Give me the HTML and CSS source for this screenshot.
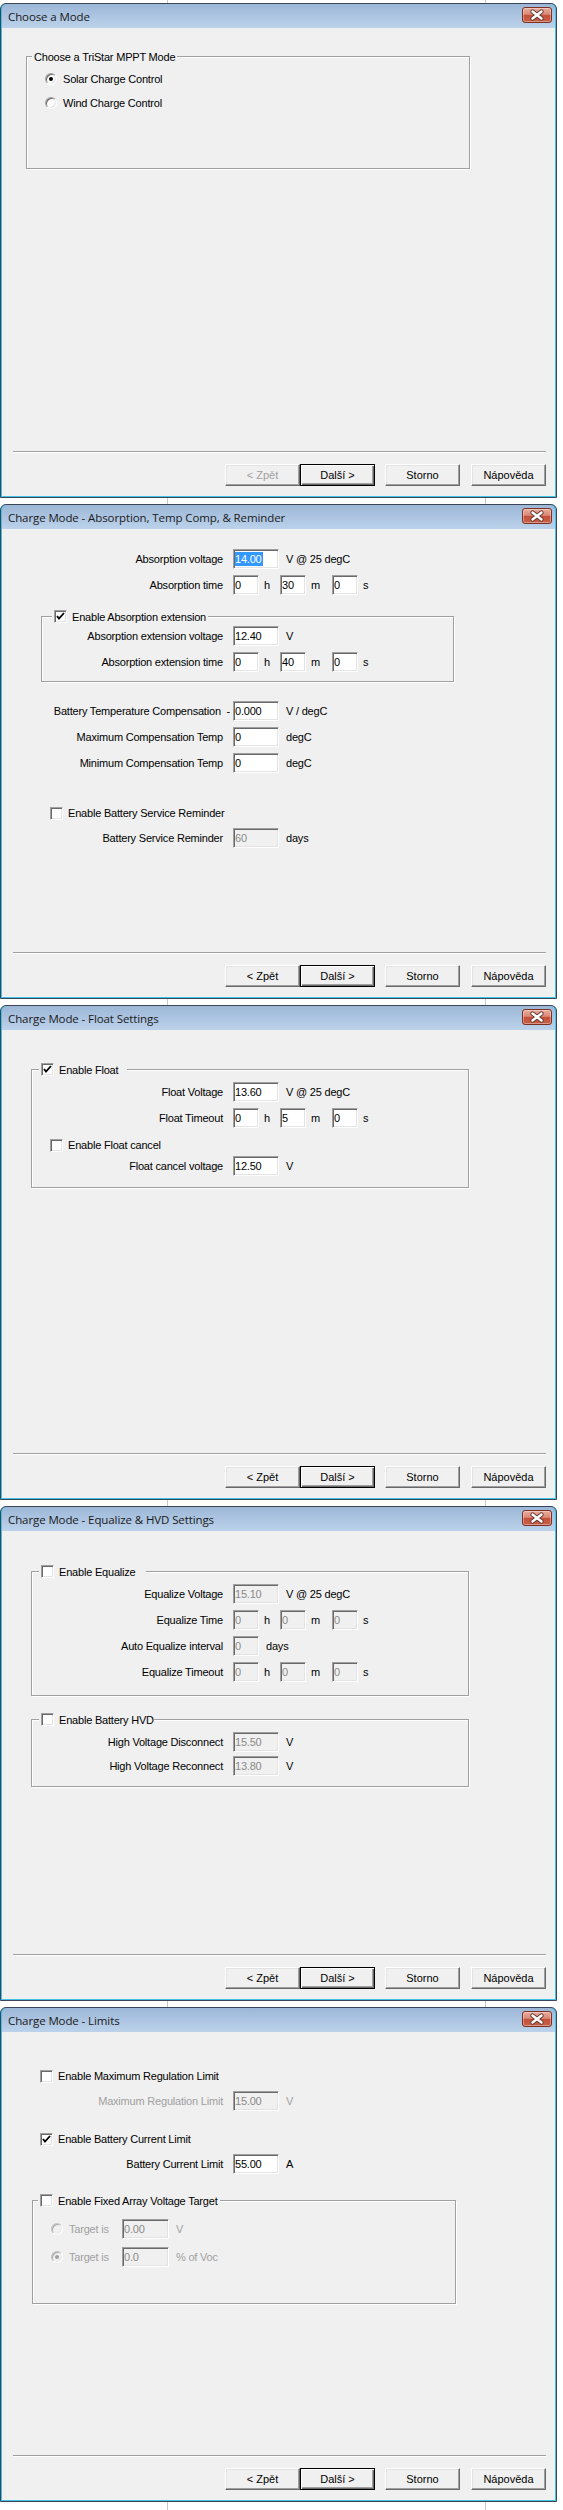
FILE: index.html
```html
<!DOCTYPE html>
<html lang="cs">
<head>
  <meta charset="UTF-8">
  <title>TriStar MPPT - Charge Mode</title>
  <link rel="stylesheet" href="styles.css">
</head>
<body>

  <!-- 1. mode -->
  <div class="win">
    <div class="titlebar">
      <span class="title">Choose a Mode</span>
      <span class="close"><svg width="30" height="16" viewBox="0 0 30 16"><path d="M10.5 4.5 19.5 11.5M19.5 4.5 10.5 11.5" stroke="#6a3b34" stroke-width="4.4" stroke-linecap="round"/><path d="M10.5 4.5 19.5 11.5M19.5 4.5 10.5 11.5" stroke="#fff" stroke-width="2.4" stroke-linecap="round"/></svg></span>
    </div>
    <div class="client">
      <div class="body w-mode">
        <fieldset class="group g-mode">
          <legend>Choose a TriStar MPPT Mode</legend>
          <div class="opt"><span class="radio on"></span>Solar Charge Control</div>
          <div class="opt"><span class="radio"></span>Wind Charge Control</div>
        </fieldset>
      </div>
      <div class="footer">
        <div class="sep"></div>
        <div class="buttons">
          <button class="btn" disabled>&lt; Zpět</button>
          <button class="btn default">Další &gt;</button>
          <button class="btn cancel">Storno</button>
          <button class="btn help">Nápověda</button>
        </div>
      </div>
    </div>
  </div>

  <!-- 2. absorption -->
  <div class="win">
    <div class="titlebar">
      <span class="title">Charge Mode - Absorption, Temp Comp, &amp; Reminder</span>
      <span class="close"><svg width="30" height="16" viewBox="0 0 30 16"><path d="M10.5 4.5 19.5 11.5M19.5 4.5 10.5 11.5" stroke="#6a3b34" stroke-width="4.4" stroke-linecap="round"/><path d="M10.5 4.5 19.5 11.5M19.5 4.5 10.5 11.5" stroke="#fff" stroke-width="2.4" stroke-linecap="round"/></svg></span>
    </div>
    <div class="client">
      <div class="body w-abs">
        <div class="row">
          <span class="lbl">Absorption voltage</span>
          <span class="edit"><span class="sel">14.00</span></span>
          <span class="unit">V @ 25 degC</span>
        </div>
        <div class="row">
          <span class="lbl">Absorption time</span>
          <span class="edit sm">0</span><span class="tu">h</span>
          <span class="edit sm">30</span><span class="tu m">m</span>
          <span class="edit sm">0</span><span class="tu">s</span>
        </div>

        <fieldset class="group g-ext">
          <legend><span class="box on"></span>Enable Absorption extension</legend>
          <div class="row">
            <span class="lbl">Absorption extension voltage</span>
            <span class="edit">12.40</span>
            <span class="unit">V</span>
          </div>
          <div class="row">
            <span class="lbl">Absorption extension time</span>
            <span class="edit sm">0</span><span class="tu">h</span>
            <span class="edit sm">40</span><span class="tu m">m</span>
            <span class="edit sm">0</span><span class="tu">s</span>
          </div>
        </fieldset>

        <div class="row r-comp">
          <span class="lbl minus">Battery Temperature Compensation  -</span>
          <span class="edit">0.000</span>
          <span class="unit">V / degC</span>
        </div>
        <div class="row">
          <span class="lbl">Maximum Compensation Temp</span>
          <span class="edit">0</span>
          <span class="unit">degC</span>
        </div>
        <div class="row">
          <span class="lbl">Minimum Compensation Temp</span>
          <span class="edit">0</span>
          <span class="unit">degC</span>
        </div>

        <div class="check c-remind"><span class="box"></span>Enable Battery Service Reminder</div>
        <div class="row r-remind">
          <span class="lbl">Battery Service Reminder</span>
          <span class="edit off">60</span>
          <span class="unit">days</span>
        </div>
      </div>
      <div class="footer">
        <div class="sep"></div>
        <div class="buttons">
          <button class="btn">&lt; Zpět</button>
          <button class="btn default">Další &gt;</button>
          <button class="btn cancel">Storno</button>
          <button class="btn help">Nápověda</button>
        </div>
      </div>
    </div>
  </div>

  <!-- 3. float -->
  <div class="win">
    <div class="titlebar">
      <span class="title">Charge Mode - Float Settings</span>
      <span class="close"><svg width="30" height="16" viewBox="0 0 30 16"><path d="M10.5 4.5 19.5 11.5M19.5 4.5 10.5 11.5" stroke="#6a3b34" stroke-width="4.4" stroke-linecap="round"/><path d="M10.5 4.5 19.5 11.5M19.5 4.5 10.5 11.5" stroke="#fff" stroke-width="2.4" stroke-linecap="round"/></svg></span>
    </div>
    <div class="client">
      <div class="body w-float">
        <fieldset class="group g-float">
          <legend><span class="box on"></span>Enable Float</legend>
          <div class="row">
            <span class="lbl">Float Voltage</span>
            <span class="edit">13.60</span>
            <span class="unit">V @ 25 degC</span>
          </div>
          <div class="row">
            <span class="lbl">Float Timeout</span>
            <span class="edit sm">0</span><span class="tu">h</span>
            <span class="edit sm">5</span><span class="tu m">m</span>
            <span class="edit sm">0</span><span class="tu">s</span>
          </div>
          <div class="check c-cancel"><span class="box"></span>Enable Float cancel</div>
          <div class="row r-cancel">
            <span class="lbl">Float cancel voltage</span>
            <span class="edit">12.50</span>
            <span class="unit">V</span>
          </div>
        </fieldset>
      </div>
      <div class="footer">
        <div class="sep"></div>
        <div class="buttons">
          <button class="btn">&lt; Zpět</button>
          <button class="btn default">Další &gt;</button>
          <button class="btn cancel">Storno</button>
          <button class="btn help">Nápověda</button>
        </div>
      </div>
    </div>
  </div>

  <!-- 4. equalize & hvd -->
  <div class="win">
    <div class="titlebar">
      <span class="title">Charge Mode - Equalize &amp; HVD Settings</span>
      <span class="close"><svg width="30" height="16" viewBox="0 0 30 16"><path d="M10.5 4.5 19.5 11.5M19.5 4.5 10.5 11.5" stroke="#6a3b34" stroke-width="4.4" stroke-linecap="round"/><path d="M10.5 4.5 19.5 11.5M19.5 4.5 10.5 11.5" stroke="#fff" stroke-width="2.4" stroke-linecap="round"/></svg></span>
    </div>
    <div class="client">
      <div class="body w-eq">
        <fieldset class="group g-eq">
          <legend><span class="box"></span>Enable Equalize</legend>
          <div class="row">
            <span class="lbl">Equalize Voltage</span>
            <span class="edit off">15.10</span>
            <span class="unit">V @ 25 degC</span>
          </div>
          <div class="row r-eqtime">
            <span class="lbl">Equalize Time</span>
            <span class="edit sm off">0</span><span class="tu">h</span>
            <span class="edit sm off">0</span><span class="tu m">m</span>
            <span class="edit sm off">0</span><span class="tu">s</span>
          </div>
          <div class="row">
            <span class="lbl">Auto Equalize interval</span>
            <span class="edit sm off">0</span>
            <span class="unit">days</span>
          </div>
          <div class="row">
            <span class="lbl">Equalize Timeout</span>
            <span class="edit sm off">0</span><span class="tu">h</span>
            <span class="edit sm off">0</span><span class="tu m">m</span>
            <span class="edit sm off">0</span><span class="tu">s</span>
          </div>
        </fieldset>

        <fieldset class="group g-hvd">
          <legend><span class="box"></span>Enable Battery HVD</legend>
          <div class="row">
            <span class="lbl">High Voltage Disconnect</span>
            <span class="edit off">15.50</span>
            <span class="unit">V</span>
          </div>
          <div class="row">
            <span class="lbl">High Voltage Reconnect</span>
            <span class="edit off">13.80</span>
            <span class="unit">V</span>
          </div>
        </fieldset>
      </div>
      <div class="footer">
        <div class="sep"></div>
        <div class="buttons">
          <button class="btn">&lt; Zpět</button>
          <button class="btn default">Další &gt;</button>
          <button class="btn cancel">Storno</button>
          <button class="btn help">Nápověda</button>
        </div>
      </div>
    </div>
  </div>

  <!-- 5. limits -->
  <div class="win">
    <div class="titlebar">
      <span class="title">Charge Mode - Limits</span>
      <span class="close"><svg width="30" height="16" viewBox="0 0 30 16"><path d="M10.5 4.5 19.5 11.5M19.5 4.5 10.5 11.5" stroke="#6a3b34" stroke-width="4.4" stroke-linecap="round"/><path d="M10.5 4.5 19.5 11.5M19.5 4.5 10.5 11.5" stroke="#fff" stroke-width="2.4" stroke-linecap="round"/></svg></span>
    </div>
    <div class="client">
      <div class="body w-lim">
        <div class="check c-maxreg"><span class="box"></span>Enable Maximum Regulation Limit</div>
        <div class="row r-sub dis">
          <span class="lbl">Maximum Regulation Limit</span>
          <span class="edit off">15.00</span>
          <span class="unit">V</span>
        </div>
        <div class="check c-curr"><span class="box on"></span>Enable Battery Current Limit</div>
        <div class="row r-sub">
          <span class="lbl">Battery Current Limit</span>
          <span class="edit">55.00</span>
          <span class="unit">A</span>
        </div>

        <fieldset class="group g-arr">
          <legend><span class="box"></span>Enable Fixed Array Voltage Target</legend>
          <div class="opt dis"><span class="radio"></span><span class="olbl">Target is</span><span class="edit off">0.00</span><span class="unit">V</span></div>
          <div class="opt dis"><span class="radio on"></span><span class="olbl">Target is</span><span class="edit off">0.0</span><span class="unit">% of Voc</span></div>
        </fieldset>
      </div>
      <div class="footer">
        <div class="sep"></div>
        <div class="buttons">
          <button class="btn">&lt; Zpět</button>
          <button class="btn default">Další &gt;</button>
          <button class="btn cancel">Storno</button>
          <button class="btn help">Nápověda</button>
        </div>
      </div>
    </div>
  </div>

</body>
</html>
```

FILE: styles.css
```css
* {
  box-sizing: border-box;
}

body {
  margin: 0;
  padding: 3px 0 0;
  width: 563px;
  font-family: "Liberation Sans", Arial, sans-serif;
  font-size: 11px;
  letter-spacing: -0.2px;
  color: #000;
  background-color: #fff;
  /* grid lines of the window behind */
  background-image: linear-gradient(to right,
    transparent 167px, #c9c9c9 167px, #c9c9c9 168px, transparent 168px,
    transparent 485px, #c9c9c9 485px, #c9c9c9 486px, transparent 486px);
}

/* ---------- window frame ---------- */

.win {
  width: 557px;
  height: 495px;
  margin-bottom: 6px;
  padding: 0 1px 1px;
  border: 1px solid #3a4658;
  border-radius: 6px 6px 0 0;
  background: #3fc3e6;
  display: flex;
  flex-direction: column;
  overflow: hidden;
}

.titlebar {
  flex: none;
  height: 24px;
  padding: 0 3px 0 6px;
  display: flex;
  align-items: center;
  justify-content: space-between;
  background: linear-gradient(#9cb7d7, #bcd2eb);
  border-radius: 5px 5px 0 0;
}

.title {
  font-family: "Open Sans", sans-serif;
  font-size: 11.5px;
  letter-spacing: -0.1px;
  color: #1a1a1a;
}

.close {
  align-self: flex-start;
  margin-top: 3px;
  width: 30px;
  height: 16px;
  border: 1px solid #7d2f24;
  border-radius: 3px;
  background: linear-gradient(#e9ab9b, #d98a77 45%, #c5503a 52%, #c75f47);
  box-shadow: inset 0 0 0 1px rgba(255, 255, 255, 0.35);
  display: flex;
  align-items: center;
  justify-content: center;
}

.close svg {
  display: block;
  margin: -1px;
}

.client {
  flex: 1;
  background: #f0f0f0;
  display: flex;
  flex-direction: column;
}

.body {
  flex: 1;
}

/* ---------- footer ---------- */

.footer {
  flex: none;
  padding: 0 9px 10px 11px;
}

.sep {
  height: 2px;
  border-top: 1px solid #a0a0a0;
  border-bottom: 1px solid #fff;
  margin-bottom: 11px;
}

.buttons {
  display: flex;
  justify-content: flex-end;
}

.btn {
  width: 75px;
  height: 22px;
  padding: 0;
  font: inherit;
  color: #000;
  background: #f0f0f0;
  border: 1px solid;
  border-color: #fff #696969 #696969 #fff;
  box-shadow: inset -1px -1px 0 #a0a0a0, inset 1px 1px 0 #e3e3e3;
}

.btn:disabled {
  color: #a0a0a0;
}

.btn.default {
  border: 1px solid #000;
  box-shadow: inset 1px 1px 0 #fff, inset -1px -1px 0 #696969, inset -2px -2px 0 #a0a0a0;
}

.btn.cancel {
  margin-left: 10px;
}

.btn.help {
  margin-left: 11px;
}

/* ---------- controls ---------- */

.group {
  margin: 0;
  padding: 0;
  border: 1px solid #a0a0a0;
  box-shadow: 1px 1px 0 #fff, inset 1px 1px 0 #fff;
}

.group legend {
  height: 15px;
  padding: 0 2px;
  display: flex;
  align-items: center;
  background: #f0f0f0;
}

.row {
  display: flex;
  align-items: center;
  height: 20px;
  --lw: 231px;
}

.lbl {
  flex: none;
  width: var(--lw);
  padding-right: 10px;
  text-align: right;
  white-space: nowrap;
}

.lbl.minus {
  white-space: pre;
  padding-right: 3px;
}

.edit {
  flex: none;
  width: 46px;
  height: 20px;
  padding: 0 1px;
  display: flex;
  align-items: center;
  background: #fff;
  border: 1px solid;
  border-color: #a0a0a0 #fff #fff #a0a0a0;
  box-shadow: inset 1px 1px 0 #696969, inset -1px -1px 0 #e3e3e3;
  line-height: 14px;
}

.edit.sm {
  width: 26px;
}

.edit.off {
  background: #f0f0f0;
  color: #8a8a8a;
}

.sel {
  background: #3399ff;
  color: #fff;
  padding-right: 1px;
}

.unit {
  padding-left: 7px;
  white-space: nowrap;
}

.tu {
  flex: none;
  width: 21px;
  padding-left: 5px;
}

.tu.m {
  width: 26px;
}

.check,
.opt {
  display: flex;
  align-items: center;
  height: 20px;
  white-space: nowrap;
}

.box {
  flex: none;
  width: 13px;
  height: 13px;
  margin-right: 5px;
  background: #fff;
  border: 1px solid;
  border-color: #a0a0a0 #fff #fff #a0a0a0;
  box-shadow: inset 1px 1px 0 #696969, inset -1px -1px 0 #e3e3e3;
}

.box.on {
  background: #fff url("data:image/svg+xml,%3Csvg xmlns='http://www.w3.org/2000/svg' width='11' height='11'%3E%3Cpath d='M2 5l2 2.5L9 2' fill='none' stroke='%23000' stroke-width='1.8'/%3E%3C/svg%3E") no-repeat center;
}

.radio {
  flex: none;
  width: 12px;
  height: 12px;
  margin-right: 6px;
  border-radius: 50%;
  background: #fff;
  border: 1px solid;
  border-color: #a0a0a0 #fff #fff #a0a0a0;
  box-shadow: inset 1px 1px 0 #696969, inset -1px -1px 0 #e3e3e3;
  display: flex;
  align-items: center;
  justify-content: center;
}

.radio.on::after {
  content: "";
  width: 4px;
  height: 4px;
  border-radius: 50%;
  background: #000;
}

.dis {
  color: #a0a0a0;
}

.dis .radio {
  background: #f0f0f0;
  border-color: #c4c4c4 #fff #fff #c4c4c4;
  box-shadow: inset 1px 1px 0 #a8a8a8, inset -1px -1px 0 #e8e8e8;
}

.dis .radio.on::after {
  background: #a0a0a0;
}

/* ---------- 1. mode ---------- */

.w-mode {
  padding-top: 21px;
}

.g-mode {
  margin-left: 24px;
  width: 444px;
  padding: 5px 0 55px;
}

.g-mode legend {
  margin-left: 5px;
}

.g-mode .opt {
  margin-left: 18px;
}

.g-mode .opt + .opt {
  margin-top: 4px;
}

/* ---------- 2. absorption ---------- */

.w-abs {
  padding-top: 20px;
}

.w-abs > .row + .row {
  margin-top: 6px;
}

.g-ext {
  margin: 14px 0 0 39px;
  width: 413px;
  padding: 2px 0 9px;
}

.g-ext legend {
  margin-left: 10px;
}

.g-ext .row {
  --lw: 191px;
}

.g-ext .row + .row {
  margin-top: 6px;
}

.w-abs .r-comp {
  margin-top: 19px;
}

.c-remind {
  margin: 30px 0 0 48px;
}

.w-abs .r-remind {
  margin-top: 5px;
}

/* ---------- 3. float ---------- */

.w-float {
  padding-top: 32px;
}

.g-float {
  margin-left: 29px;
  width: 438px;
  padding: 5px 0 11px;
}

.g-float legend {
  margin-left: 7px;
  padding-right: 9px;
}

.g-float .row {
  --lw: 201px;
}

.g-float .row + .row {
  margin-top: 6px;
}

.c-cancel {
  margin: 7px 0 0 18px;
}

.g-float .r-cancel {
  margin-top: 1px;
}

/* ---------- 4. equalize & hvd ---------- */

.w-eq {
  padding-top: 33px;
}

.g-eq,
.g-hvd {
  margin-left: 29px;
  width: 438px;
  padding: 5px 0 13px;
}

.g-eq legend {
  margin-left: 7px;
  padding-right: 10px;
}

.g-hvd {
  margin-top: 16px;
  padding-bottom: 10px;
}

.g-hvd legend {
  margin-left: 7px;
  padding-right: 0;
}

.g-eq .row,
.g-hvd .row {
  --lw: 201px;
}

.g-eq .row + .row {
  margin-top: 6px;
}

.g-eq .r-eqtime {
  margin-top: 7px;
}

.g-hvd .row + .row {
  margin-top: 4px;
}

/* ---------- 5. limits ---------- */

.w-lim {
  padding-top: 34px;
}

.c-maxreg,
.c-curr {
  margin-left: 38px;
}

.c-curr {
  margin-top: 18px;
}

.w-lim .r-sub {
  margin-top: 5px;
}

.g-arr {
  margin: 19px 0 0 30px;
  width: 424px;
  padding: 11px 0 36px;
}

.g-arr legend {
  margin-left: 5px;
}

.g-arr .opt {
  margin-left: 18px;
}

.g-arr .opt + .opt {
  margin-top: 8px;
}

.olbl {
  width: 53px;
}

.g-arr .edit {
  width: 47px;
}
```
